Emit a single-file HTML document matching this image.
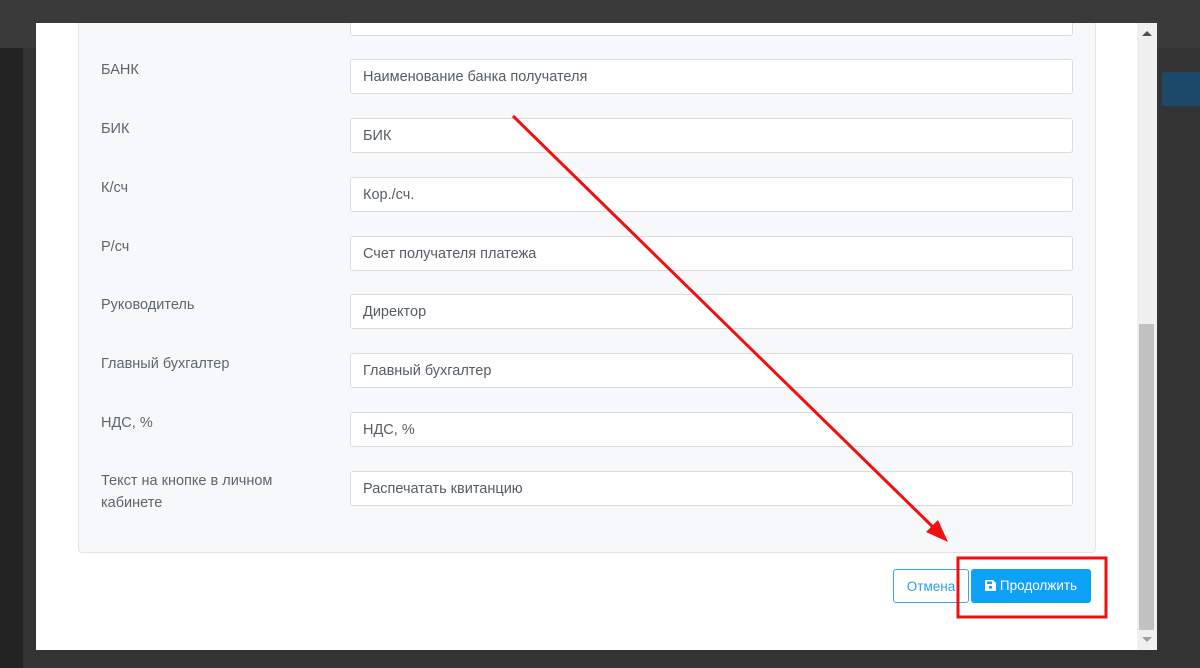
<!DOCTYPE html>
<html><head><meta charset="utf-8"><style>
body{margin:0;width:1200px;height:668px;background:#333;position:relative;overflow:hidden;font-family:"Liberation Sans",sans-serif}
.top{position:absolute;left:0;top:0;width:1200px;height:48px;background:#3a3a3a}
.leftdark{position:absolute;left:0;top:48px;width:23px;height:620px;background:#232323}
.modal{position:absolute;left:36px;top:23px;width:1121px;height:627px;background:#fff;overflow:hidden}
.panel{position:absolute;left:42px;top:-5px;width:1016px;height:534px;background:#f7f8fa;border:1px solid #e1e4e8;border-top:none;border-radius:0 0 4px 4px}
.lbl{position:absolute;left:65px;font-size:14.5px;color:#5b6670;line-height:22px}
.inp{position:absolute;left:314px;width:709px;height:33px;background:#fff;border:1px solid #d9dde2;border-radius:3px;font-size:14.5px;color:#555d66;line-height:35px;padding-left:12px}
.sb{position:absolute;left:1101px;top:0;width:20px;height:627px;background:#f0f0f0}
.thumb{position:absolute;left:2px;top:301px;width:15px;height:306px;background:#c1c1c1}
.btn1{position:absolute;left:857px;top:546px;width:76px;height:34px;border:1px solid #2ea8f0;border-radius:3px;color:#2a9ee8;font-size:13.5px;text-align:center;line-height:34px;box-sizing:border-box}
.btn2{position:absolute;left:935px;top:546px;width:120px;height:34px;background:#0ea2f7;border-radius:3px;color:#fff;font-size:13.5px;text-align:center;line-height:34px}
</style></head><body>
<div class="top"></div><div class="leftdark"></div>
<div style="position:absolute;left:1162px;top:72px;width:40px;height:34px;background:#1d4a6a;border-radius:3px"></div>
<div class="modal">
<div class="panel"></div>
<div class="inp" style="top:-22px"></div>
<div class="lbl" style="top:36px">БАНК</div><div class="inp" style="top:36px">Наименование банка получателя</div>
<div class="lbl" style="top:95px">БИК</div><div class="inp" style="top:95px">БИК</div>
<div class="lbl" style="top:154px">К/сч</div><div class="inp" style="top:154px">Кор./сч.</div>
<div class="lbl" style="top:213px">Р/сч</div><div class="inp" style="top:213px">Счет получателя платежа</div>
<div class="lbl" style="top:271px">Руководитель</div><div class="inp" style="top:271px">Директор</div>
<div class="lbl" style="top:330px">Главный бухгалтер</div><div class="inp" style="top:330px">Главный бухгалтер</div>
<div class="lbl" style="top:389px">НДС, %</div><div class="inp" style="top:389px">НДС, %</div>
<div class="lbl" style="top:447px">Текст на кнопке в личном<br>кабинете</div><div class="inp" style="top:448px">Распечатать квитанцию</div>
<div class="btn1">Отмена</div>
<div class="btn2"><svg width="11" height="11" viewBox="0 0 11 11" style="vertical-align:-1px;margin-right:4px"><path d="M0 1a1 1 0 011-1h7l3 3v7a1 1 0 01-1 1H1a1 1 0 01-1-1z" fill="#fff"/><rect x="2" y="1.5" width="5" height="2.5" fill="#0ea2f7"/><circle cx="5.5" cy="7.3" r="1.6" fill="#0ea2f7"/></svg>Продолжить</div>
<div class="sb"><div style="position:absolute;left:5px;top:8px;border:5px solid transparent;border-bottom:5px solid #505050;border-top:0"></div><div class="thumb"></div><div style="position:absolute;left:5px;top:614px;border:5px solid transparent;border-top:5px solid #a0a0a0;border-bottom:0"></div></div>
</div>
<svg style="position:absolute;left:0;top:0" width="1200" height="668">
<line x1="513" y1="116" x2="936" y2="530" stroke="#f01010" stroke-width="3"/>
<polygon points="948,542 926,532 938,520" fill="#f01010"/>
<rect x="958" y="558" width="148" height="59" fill="none" stroke="#f01010" stroke-width="3"/>
</svg>
</body></html>
